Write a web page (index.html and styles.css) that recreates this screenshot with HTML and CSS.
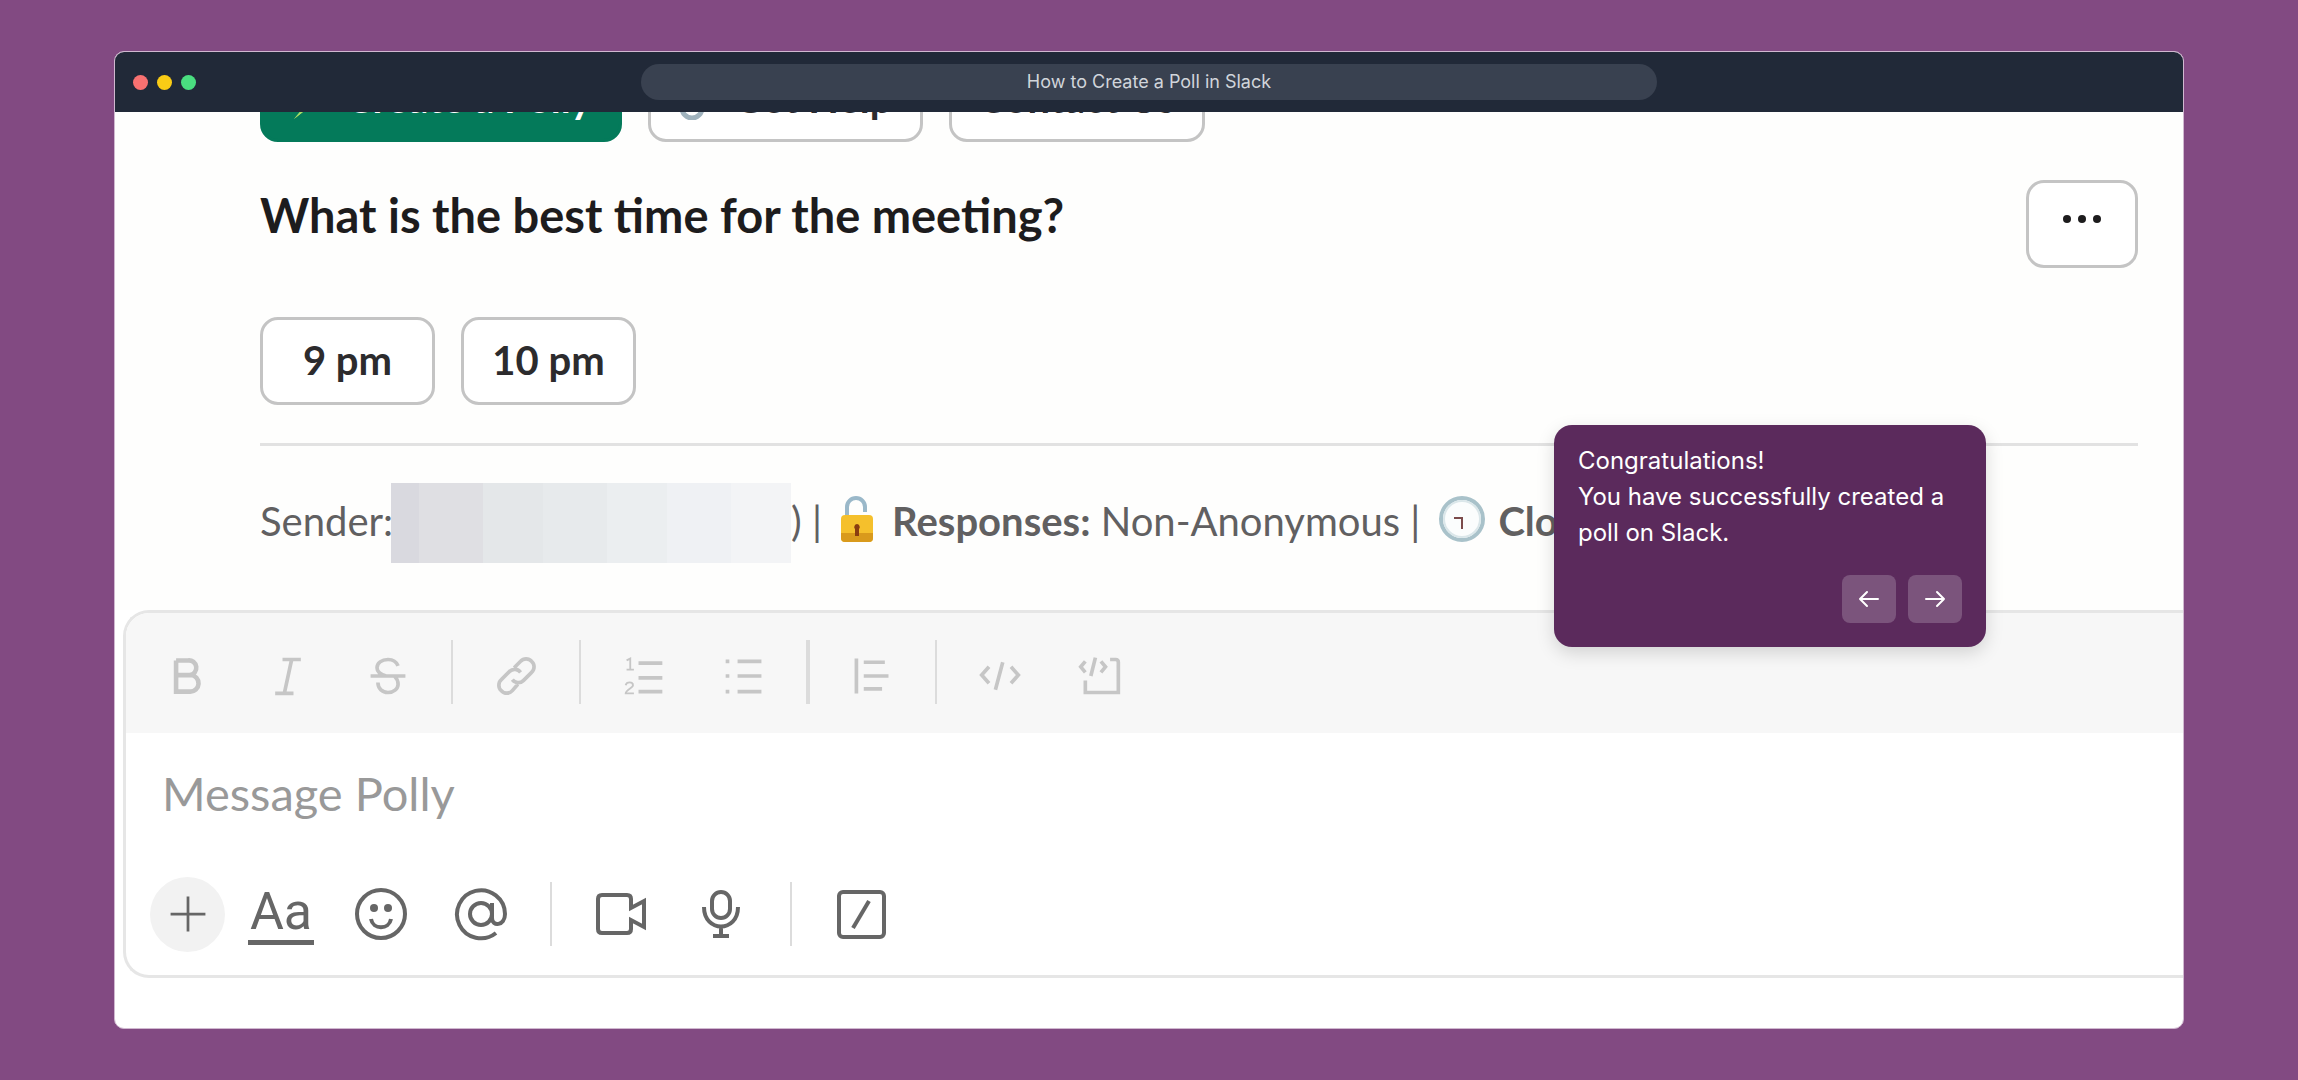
FILE: index.html
```html
<!DOCTYPE html>
<html lang="en">
<head>
    <meta charset="UTF-8">
    <meta name="viewport" content="width=device-width, initial-scale=1.0">
    <title>How to Create a Poll in Slack</title>
    <link rel="stylesheet" href="styles.css">
</head>
<body>
    <main class="window">
        <header class="titlebar">
            <div class="lights">
                <span class="light red"></span>
                <span class="light yellow"></span>
                <span class="light green"></span>
            </div>
            <div class="address">How to Create a Poll in Slack</div>
        </header>

        <div class="screen">
            <section class="message">
                <div class="actions">
                    <button type="button" class="btn btn-primary">
                        <svg class="emoji" viewBox="0 0 44 44"><path d="M30 2 10 24h12L4 43l30-24H22L38 2z" fill="#e8c93a"/><path d="M16 28 4 43l14-11z" fill="#a5e06a"/></svg>
                        Create a Polly
                    </button>
                    <button type="button" class="btn">
                        <svg class="emoji" viewBox="0 0 44 44" fill="none" stroke="#9fb2bd" stroke-width="5"><rect x="16" y="3" width="18" height="24" rx="9"/><rect x="4" y="18" width="20" height="24" rx="10"/></svg>
                        Get Help
                    </button>
                    <button type="button" class="btn">Contact Us</button>
                </div>

                <div class="question-row">
                    <h1>What is the best time for the meeting?</h1>
                    <button type="button" class="btn btn-more" aria-label="More actions">
                        <svg width="42" height="12" viewBox="0 0 42 12" fill="#1d1c1d"><circle cx="6" cy="6" r="4"/><circle cx="21" cy="6" r="4"/><circle cx="36" cy="6" r="4"/></svg>
                    </button>
                </div>

                <div class="options">
                    <button type="button" class="btn btn-option">9 pm</button>
                    <button type="button" class="btn btn-option">10 pm</button>
                </div>

                <hr>

                <div class="details">
                    <span>Sender:</span>
                    <span class="redacted"></span>
                    <span>) |</span>
                    <svg class="lock" width="34" height="48" viewBox="0 0 34 48">
                        <path d="M7 24V12a9 9 0 0 1 18 0v5" fill="none" stroke="#9ab8c9" stroke-width="4"/>
                        <rect x="1" y="20" width="32" height="27" rx="4" fill="#f5c02c"/>
                        <path d="M1 38h32v5a4 4 0 0 1-4 4H5a4 4 0 0 1-4-4z" fill="#d99a1c"/>
                        <path d="M17 29a3 3 0 0 1 2 5v7h-4v-7a3 3 0 0 1 2-5z" fill="#8a3d10"/>
                    </svg>
                    <span><b>Responses:</b> Non-Anonymous |</span>
                    <svg class="clock" width="48" height="48" viewBox="0 0 48 48" fill="none">
                        <circle cx="24" cy="24" r="21" fill="#fbfdfd" stroke="#a9c2ca" stroke-width="4"/>
                        <circle cx="24" cy="24" r="18" stroke="#dbe7ea" stroke-width="2"/>
                        <path d="M16 23h8v11" stroke="#7b4b4b" stroke-width="2"/>
                    </svg>
                    <b>Closes:</b>
                </div>
            </section>

            <form class="composer">
                <div class="toolbar format">
                    <button type="button" aria-label="Bold"><svg viewBox="0 0 48 48"><path d="M11 7v34h15a9 9 0 0 0 1-18H11M11 7h13a8 8 0 0 1 2 16" stroke-width="5"/></svg></button>
                    <button type="button" aria-label="Italic"><svg viewBox="0 0 48 48"><path d="M18 6h20M10 43h20M28 6l-8 37"/></svg></button>
                    <button type="button" aria-label="Strikethrough"><svg viewBox="0 0 48 48"><path d="M5 24h38M35 13c-2-5-6-7-11-7-7 0-12 4-12 9 0 4 3 7 10 9M13 31c0 7 5 11 11 11s11-4 11-9c0-3-1-6-4-9"/></svg></button>
                    <span class="sep"></span>
                    <button type="button" aria-label="Link"><svg viewBox="0 0 48 48"><path d="M22 15l7-7a8 8 0 0 1 12 0 8 8 0 0 1 0 12l-9 9a8 8 0 0 1-12-1M26 33l-6 7a8 8 0 0 1-12 0 8 8 0 0 1 0-12l9-9a8 8 0 0 1 12 1"/></svg></button>
                    <span class="sep"></span>
                    <button type="button" aria-label="Ordered list"><svg viewBox="0 0 48 48"><path d="M18 10h26M18 26h26M18 41h26"/><path d="M5 7l4-2v12M5 17h8M4 34c1-4 8-4 8 0 0 3-8 5-8 9h9" stroke-width="2"/></svg></button>
                    <button type="button" aria-label="Bulleted list"><svg viewBox="0 0 48 48"><path d="M17 8h26M17 24h26M17 41h26M4 8h4M4 24h4M4 41h4"/></svg></button>
                    <span class="sep sep-thick"></span>
                    <button type="button" aria-label="Quote"><svg viewBox="0 0 48 48"><path d="M7 5v38M15 9h23M15 24h27M15 38h20"/></svg></button>
                    <span class="sep"></span>
                    <button type="button" aria-label="Code"><svg viewBox="0 0 48 48"><path d="M12 14 4 23l8 9M36 14l8 9-8 9M27 9l-8 30"/></svg></button>
                    <button type="button" aria-label="Code block"><svg viewBox="0 0 48 48"><path d="M8 8l-5 6 5 6M25 8l5 6-5 6M19 4l-5 20M35 6h6q3 0 3 3v33H8V29"/></svg></button>
                </div>
                <input type="text" class="message-input" placeholder="Message Polly" aria-label="Message Polly">
                <div class="toolbar tools">
                    <button type="button" class="plus" aria-label="Attach"><svg viewBox="0 0 48 48"><path d="M24 5v38M5 24h38"/></svg></button>
                    <button type="button" class="text-format" aria-label="Formatting"><span>Aa</span></button>
                    <button type="button" aria-label="Emoji"><svg class="large" viewBox="0 0 54 54"><circle cx="27" cy="27" r="24"/><path d="M17 32c2 11 18 11 20 0"/><g fill="#666" stroke="none"><circle cx="20" cy="21" r="4"/><circle cx="34" cy="21" r="4"/></g></svg></button>
                    <button type="button" aria-label="Mention someone"><svg class="large" viewBox="0 0 54 54"><circle cx="27" cy="27" r="11"/><path d="M38 16v15c0 9 13 8 13-4a24 24 0 1 0-9 19"/></svg></button>
                    <span class="sep"></span>
                    <button type="button" aria-label="Record video"><svg class="large" viewBox="0 0 54 54"><path d="M8 8h25q4 0 4 4v9l13-7v26l-13-7v9q0 4-4 4H8q-4 0-4-4V12q0-4 4-4z"/></svg></button>
                    <button type="button" aria-label="Record audio"><svg class="large" viewBox="0 0 54 54"><rect x="18" y="5" width="18" height="26" rx="9"/><path d="M10 20c0 26 34 26 34 0M27 40v9M19 49h16"/></svg></button>
                    <span class="sep"></span>
                    <button type="button" aria-label="Shortcuts"><svg class="large" viewBox="0 0 54 54"><rect x="5" y="5" width="45" height="45" rx="4"/><path d="M35 14 19 41"/></svg></button>
                </div>
            </form>

            <aside class="popup">
                <p>Congratulations!<br>You have successfully created a poll on Slack.</p>
                <div class="popup-nav">
                    <button type="button" aria-label="Previous"><svg viewBox="0 0 24 24"><path d="M21 12H3M10 5l-7 7 7 7"/></svg></button>
                    <button type="button" aria-label="Next"><svg viewBox="0 0 24 24"><path d="M3 12h18M14 5l7 7-7 7"/></svg></button>
                </div>
            </aside>
        </div>
    </main>
</body>
</html>
```

FILE: styles.css
```css
* {
    box-sizing: border-box;
}
body {
    margin: 0;
    min-height: 100vh;
    padding: 51px 114px;
    display: flex;
    background-color: #824a82;
    font-family: Lato, sans-serif;
}
button {
    padding: 0;
    border: none;
    background: none;
    font-family: inherit;
    cursor: pointer;
}
.window {
    flex: 1;
    min-width: 0;
    display: flex;
    flex-direction: column;
    overflow: hidden;
    border: 1px solid #d0b8d0;
    border-radius: 10px;
    background: white;
}

/* title bar */
.titlebar {
    display: grid;
    grid-template-columns: 1fr 2fr 1fr;
    align-items: center;
    height: 60px;
    padding: 0 18px;
    background-color: #212938;
}
.lights {
    display: flex;
    gap: 9px;
}
.light {
    width: 15px;
    height: 15px;
    border-radius: 50%;
}
.red {
    background-color: #f87171;
}
.yellow {
    background-color: #facc15;
}
.green {
    background-color: #4ade80;
}
.address {
    height: 36px;
    border-radius: 18px;
    background-color: #394150;
    color: #d1d5db;
    font-family: Inter, sans-serif;
    font-size: 18px;
    line-height: 36px;
    text-align: center;
}

/* poll message, scrolled partly under the title bar */
.screen {
    position: relative;
    flex: 1;
    overflow: hidden;
}
.message {
    margin-top: -58px;
    padding: 0 45px 51px 145px;
    background-color: #fefefd;
}
.btn {
    height: 88px;
    padding: 0 27px;
    border: 3px solid #c4c4c4;
    border-radius: 18px;
    background: white;
    color: #2c2b2d;
    font-size: 40px;
    font-weight: bold;
}
.actions, .options {
    display: flex;
    gap: 26px;
}
.actions .btn {
    display: flex;
    align-items: center;
    gap: 12px;
}
.actions .btn-primary {
    border-color: #047a5a;
    background-color: #047a5a;
    color: white;
}
.emoji {
    width: 44px;
    height: 44px;
}
.question-row {
    display: flex;
    justify-content: space-between;
    margin: 38px 0 49px;
}
h1 {
    margin: 0;
    color: #1d1c1d;
    font-size: 47px;
    line-height: 70px;
}
.btn-more {
    width: 112px;
    padding: 0 0 28px;
}
.btn-option {
    width: 175px;
    padding: 0 0 2px;
}
hr {
    margin: 38px 0 37px;
    border: none;
    border-top: 3px solid #e2e2e2;
}
.details {
    display: flex;
    align-items: center;
    height: 76px;
    color: #616061;
    font-size: 40px;
    white-space: nowrap;
}
.redacted {
    width: 400px;
    height: 80px;
    margin: 0 0 -4px -2px;
    background: linear-gradient(to right, #d9d9df 0 7%, #dfdfe3 7% 23%, #e4e7e9 23% 38%, #e7eaec 38% 54%, #ebeef0 54% 69%, #eff1f4 69% 85%, #f3f4f6 85%);
}
.lock {
    margin: 0 18px 4px;
}
.clock {
    margin: 0 12px 4px 18px;
}

/* composer */
.composer {
    margin-left: 8px;
    border: 3px solid #e6e6e6;
    border-right: none;
    border-radius: 26px 0 0 26px;
    overflow: hidden;
}
.toolbar {
    display: flex;
    align-items: center;
}
.toolbar button {
    display: flex;
    align-items: center;
    justify-content: center;
    width: 100px;
    height: 76px;
}
.toolbar svg {
    width: 44px;
    height: 44px;
    fill: none;
    stroke: currentColor;
    stroke-width: 4;
}
.toolbar .large {
    width: 54px;
    height: 54px;
}
.sep {
    width: 2px;
    height: 64px;
    margin: 0 13px;
    background-color: #dcdcdc;
}
.sep-thick {
    width: 4px;
    margin: 0 12px;
}
.format {
    height: 120px;
    padding: 0 0 2px 12px;
    background-color: #f7f7f7;
}
.format button {
    padding-top: 8px;
    color: #c6c6c6;
}
.message-input {
    display: block;
    width: 100%;
    height: 120px;
    padding: 0 36px;
    border: none;
    outline: none;
    background: none;
    font-family: inherit;
    font-size: 47px;
}
.message-input::placeholder {
    color: #999;
}
.tools {
    height: 122px;
    padding: 12px 24px;
}
.tools button {
    color: #666;
}
.tools .sep {
    margin: 0 19px;
}
.tools .plus {
    width: 75px;
    height: 75px;
    margin-right: 6px;
    border-radius: 50%;
    background-color: #f2f2f2;
}
.plus svg {
    stroke-width: 3;
}
.text-format span {
    padding: 0 2px;
    border-bottom: 5px solid #666;
    font-family: Roboto, sans-serif;
    font-size: 52px;
    line-height: 56px;
}

/* tour step */
.popup {
    position: absolute;
    top: 313px;
    right: 197px;
    width: 432px;
    padding: 18px 24px 24px;
    border-radius: 18px;
    background-color: #5b2a5c;
    box-shadow: 0 6px 18px rgba(0,0,0,0.15);
    color: white;
    font-family: Inter, sans-serif;
}
.popup p {
    margin: 0 0 24px;
    font-size: 24px;
    line-height: 36px;
}
.popup-nav {
    display: flex;
    justify-content: flex-end;
    gap: 12px;
}
.popup-nav button {
    display: flex;
    align-items: center;
    justify-content: center;
    width: 54px;
    height: 48px;
    border-radius: 8px;
    background-color: #7b547c;
}
.popup-nav svg {
    width: 24px;
    height: 24px;
    fill: none;
    stroke: white;
    stroke-width: 2;
    stroke-linecap: round;
    stroke-linejoin: round;
}
```
